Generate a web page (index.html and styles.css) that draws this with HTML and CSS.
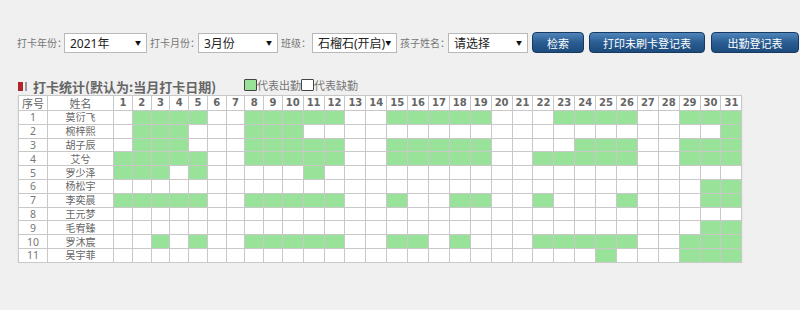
FILE: index.html
```html
<!DOCTYPE html>
<html lang="zh-CN">

<head>
    <meta charset="UTF-8">
    <meta name="viewport" content="width=device-width, initial-scale=1.0">
    <title>打卡统计</title>
    <link rel="stylesheet" href="styles.css">
</head>

<body>
    <div class="page">
        <div class="filter-bar">
            <span class="label label-year">打卡年份：</span>
            <div class="select select-year"><span>2021年</span><span class="arrow">▼</span></div>
            <span class="label label-month">打卡月份：</span>
            <div class="select select-month"><span>3月份</span><span class="arrow">▼</span></div>
            <span class="label label-class">班级：</span>
            <div class="select select-class"><span>石榴石(开启)</span><span class="arrow">▼</span></div>
            <span class="label label-child">孩子姓名：</span>
            <div class="select select-child"><span>请选择</span><span class="arrow">▼</span></div>
            <button class="btn btn-search">检索</button>
            <button class="btn btn-print">打印未刷卡登记表</button>
            <button class="btn btn-record">出勤登记表</button>
        </div>

        <div class="stat-title">
            <span class="mark-red"></span>
            <span class="mark-gray"></span>
            <h2>打卡统计(默认为:当月打卡日期)</h2>
            <span class="legend"><i class="legend-box on"></i>代表出勤</span>
            <span class="legend"><i class="legend-box"></i>代表缺勤</span>
        </div>

        <table class="punch-table" id="punch-table"></table>
    </div>

    <script>
        const DAYS = 31;

        // 每个孩子当月出勤的日期
        const students = [
            { name: "莫衍飞", days: [2, 3, 4, 5, 8, 9, 10, 11, 12, 15, 16, 17, 18, 19, 23, 24, 25, 26, 29, 30, 31] },
            { name: "椀梓熙", days: [2, 3, 4, 8, 9, 10, 31] },
            { name: "胡子辰", days: [2, 3, 4, 8, 9, 10, 11, 12, 15, 16, 17, 18, 19, 24, 25, 26, 29, 30, 31] },
            { name: "艾兮", days: [1, 2, 3, 4, 5, 8, 9, 10, 11, 12, 15, 16, 17, 18, 19, 22, 23, 24, 25, 26, 29, 30, 31] },
            { name: "罗少泽", days: [1, 2, 3, 5, 11] },
            { name: "杨松宇", days: [30, 31] },
            { name: "李奕晨", days: [1, 2, 3, 4, 5, 8, 9, 10, 11, 12, 15, 18, 19, 22, 26, 30, 31] },
            { name: "王元梦", days: [] },
            { name: "毛宥臻", days: [30, 31] },
            { name: "罗沐宸", days: [3, 5, 8, 9, 10, 11, 12, 15, 16, 18, 22, 23, 24, 25, 26, 29, 30, 31] },
            { name: "吴宇菲", days: [25, 29, 30, 31] }
        ];

        document.addEventListener('DOMContentLoaded', () => {
            const table = document.getElementById('punch-table');

            // Column widths
            let html = '<colgroup><col class="col-no"><col class="col-name">';
            for (let d = 1; d <= DAYS; d++) {
                html += `<col class="${d < 10 ? 'col-day1' : 'col-day2'}">`;
            }
            html += '</colgroup>';

            // Header
            html += '<thead><tr><th class="th-text">序号</th><th class="th-text">姓名</th>';
            for (let d = 1; d <= DAYS; d++) {
                html += `<th class="th-day">${d}</th>`;
            }
            html += '</tr></thead><tbody>';

            // Rows
            students.forEach((s, i) => {
                html += `<tr><td class="td-no">${i + 1}</td><td class="td-name">${s.name}</td>`;
                for (let d = 1; d <= DAYS; d++) {
                    html += s.days.includes(d) ? '<td class="on"></td>' : '<td></td>';
                }
                html += '</tr>';
            });
            html += '</tbody>';

            table.innerHTML = html;
        });
    </script>
</body>

</html>
```

FILE: styles.css
```css
* {
    margin: 0;
    padding: 0;
    box-sizing: border-box;
}

body {
    font-family: "Noto Sans", "Noto Sans CJK SC", sans-serif;
    background-color: #f0f0f0;
    color: #333;
}

.page {
    padding: 32px 0 0 17px;
}

/* 查询条件 */
.filter-bar {
    display: flex;
    align-items: center;
    height: 21px;
}

.label {
    font-size: 10px;
    color: #777;
    white-space: nowrap;
    overflow: visible;
    margin-left: 3px;
}

.label-year {
    width: 47px;
    margin-left: 0;
}

.label-month {
    width: 48px;
}

.label-class {
    width: 31px;
}

.label-child {
    width: 48px;
}

.select {
    display: flex;
    align-items: center;
    justify-content: space-between;
    height: 20px;
    padding: 0 5px 0 5px;
    background-color: #fff;
    border: 1px solid #b8b8b8;
    font-size: 12px;
    color: #222;
    white-space: nowrap;
}

.select .arrow {
    font-size: 6px;
    color: #111;
}

.select-year {
    width: 83px;
}

.select-month {
    width: 80px;
}

.select-class {
    width: 85px;
}

.select-child {
    width: 80px;
}

.btn {
    height: 21px;
    border: 1px solid #163a61;
    border-radius: 4px;
    background: linear-gradient(#4f85bb, #2a5d92 50%, #1d4b7c);
    color: #fff;
    font-family: "Noto Sans CJK SC", sans-serif;
    font-size: 11px;
    cursor: pointer;
}

.btn-search {
    width: 52px;
    margin-left: 4px;
}

.btn-print {
    width: 116px;
    margin-left: 5px;
}

.btn-record {
    width: 88px;
    margin-left: 6px;
}

/* 标题 */
.stat-title {
    display: flex;
    align-items: center;
    height: 17px;
    margin-top: 25px;
}

.mark-red {
    width: 5px;
    height: 9px;
    margin-left: 1px;
    background-color: #b3232b;
}

.mark-gray {
    width: 2px;
    height: 9px;
    margin-left: 2px;
    background-color: #999;
}

.stat-title h2 {
    margin-left: 6px;
    font-family: "Noto Sans CJK SC", sans-serif;
    font-size: 13px;
    font-weight: bold;
    line-height: 17px;
    color: #666;
    white-space: nowrap;
}

.legend {
    display: flex;
    align-items: center;
    font-family: "Noto Sans CJK SC", sans-serif;
    font-size: 11px;
    color: #777;
    margin-top: -3px;
}

.stat-title h2 + .legend {
    margin-left: 28px;
}

.legend-box {
    width: 13px;
    height: 12px;
    border: 1px solid #444;
    border-radius: 1px;
    background-color: #fff;
}

.legend-box.on {
    background-color: #98e29a;
}

/* 打卡表格 */
.punch-table {
    table-layout: fixed;
    width: 724px;
    margin-left: 1px;
    border-collapse: collapse;
    background-color: #fff;
    box-shadow: 0 1px 2px rgba(0, 0, 0, 0.08);
}

.col-no {
    width: 29px;
}

.col-name {
    width: 66px;
}

.col-day1 {
    width: 18.75px;
}

.col-day2 {
    width: 20.9px;
}

.punch-table th,
.punch-table td {
    border: 1px solid #c8c8c8;
    text-align: center;
    line-height: 12px;
    overflow: hidden;
    white-space: nowrap;
}

.punch-table thead tr {
    height: 15px;
}

.punch-table tbody tr {
    height: 13.8px;
}

.th-text {
    font-family: "Noto Sans CJK SC", sans-serif;
    font-size: 11px;
    font-weight: normal;
    color: #666;
}

.th-day {
    font-family: "DejaVu Sans", sans-serif;
    font-size: 10px;
    font-weight: bold;
    color: #666;
}

.td-no {
    font-family: "Noto Sans", sans-serif;
    font-size: 10.5px;
    color: #777;
}

.td-name {
    font-family: "Noto Sans CJK SC", sans-serif;
    font-size: 10px;
    color: #666;
}

.punch-table td.on {
    background-color: #98e29a;
}
```
